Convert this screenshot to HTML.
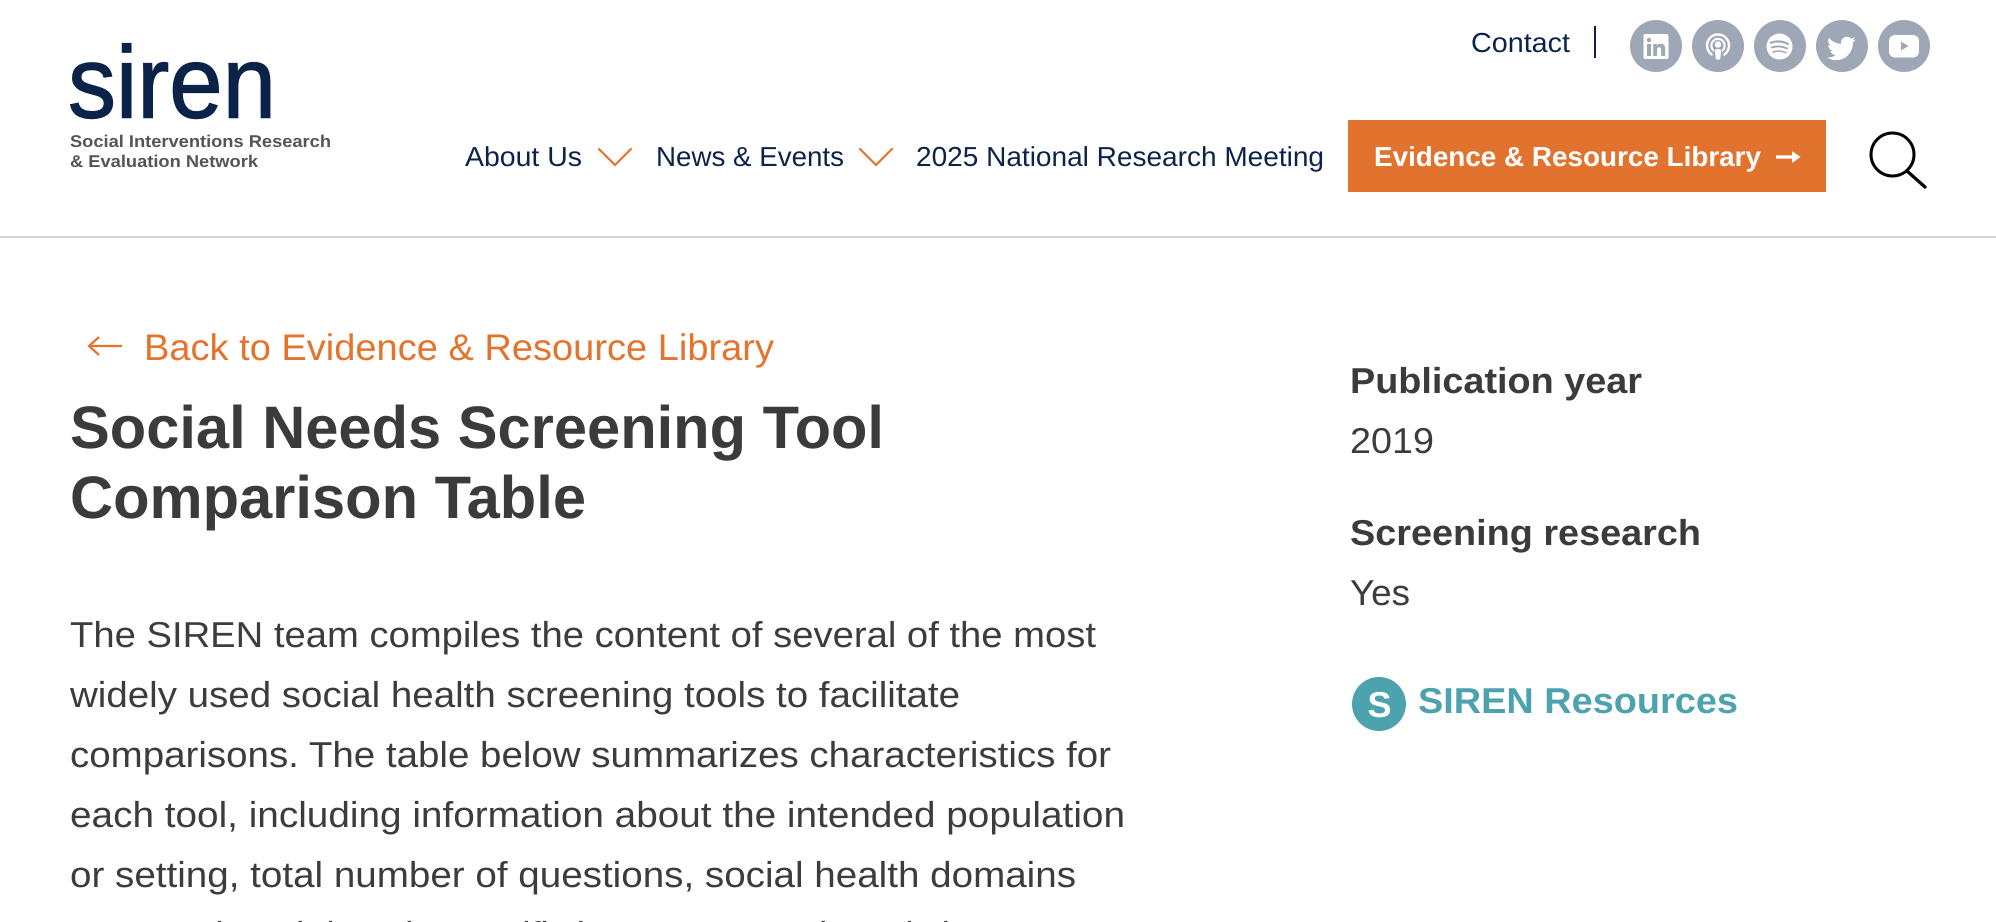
<!DOCTYPE html>
<html lang="en">
<head>
<meta charset="utf-8">
<title>Social Needs Screening Tool Comparison Table | SIREN</title>
<style>
html,body{margin:0;padding:0;background:#fff;width:1996px;height:922px;overflow:hidden}
svg{display:block}
text{font-family:"Liberation Sans",Arial,sans-serif;text-rendering:geometricPrecision}
.nav{font-size:27.5px;fill:#0b2249}
.body{font-size:36px;fill:#3c3c3c}
.h1{font-size:60px;font-weight:700;fill:#3b3b3b}
.lab{font-size:36px;font-weight:700;fill:#3b3b3b}
.sub{font-size:17px;font-weight:700;fill:#555}
</style>
</head>
<body>
<svg xmlns="http://www.w3.org/2000/svg" width="1996" height="922" viewBox="0 0 1996 922">
<rect width="1996" height="922" fill="#fff"/>

<!-- logo -->
<text x="68" y="117.500" font-size="102" fill="#0b2249" stroke="#0b2249" stroke-width="1.400" textLength="208" lengthAdjust="spacingAndGlyphs">siren</text>
<text class="sub" x="70" y="147" textLength="261" lengthAdjust="spacingAndGlyphs">Social Interventions Research</text>
<text class="sub" x="70" y="167" textLength="188" lengthAdjust="spacingAndGlyphs">&amp; Evaluation Network</text>

<!-- top row -->
<text class="nav" x="1471" y="52" textLength="99" lengthAdjust="spacingAndGlyphs">Contact</text>
<rect x="1594" y="26" width="2" height="32" fill="#0b2249"/>

<g fill="#9da7b5">
<circle cx="1656" cy="46" r="26"/><circle cx="1718" cy="46" r="26"/><circle cx="1780" cy="46" r="26"/><circle cx="1842" cy="46" r="26"/><circle cx="1904" cy="46" r="26"/>
</g>
<!-- linkedin -->
<g transform="translate(1656 46)">
<rect x="-12.500" y="-12" width="25" height="25" rx="2" fill="#fff"/>
<g fill="#9da7b5">
<circle cx="-7" cy="-6" r="2.200"/><rect x="-9" y="-2" width="4" height="12"/>
<path d="M-2.800-2h3.700v1.700c.8-1.300 2.100-2 3.700-2 3.500 0 4.600 2.300 4.600 5.400V10H5.200V4.300c0-1.600-.4-3-2-3-1.700 0-2.100 1.400-2.100 3V10H-2.800z"/>
</g>
</g>
<!-- podcast -->
<g transform="translate(1718 46)" fill="none" stroke="#fff">
<path d="M-6.300 8.500A11 11 0 1 1 6.300 8.500" stroke-width="2.400" stroke-linecap="round"/>
<path d="M-3.800 4.900A6.600 6.600 0 1 1 3.800 4.900" stroke-width="2.200" stroke-linecap="round"/>
<circle cx="0" cy="-1.500" r="3.200" fill="#fff" stroke="none"/>
<path d="M-3.800 3.500Q0 2 3.800 3.500L2.600 12.500Q2.200 14.200 0 14.200T-2.600 12.500Z" fill="#fff" stroke="#9da7b5" stroke-width=".8"/>
</g>
<!-- spotify -->
<g transform="translate(1779.500 46.500)">
<circle r="13" fill="#fff"/>
<g fill="none" stroke="#9da7b5" stroke-linecap="round">
<path d="M-8.500-3.800Q0-6.800 8.500-2.600" stroke-width="2.200"/>
<path d="M-7.500 1Q0-1.600 7.500 2" stroke-width="1.900"/>
<path d="M-6.500 5.500Q0 3.200 6.500 6.200" stroke-width="1.600"/>
</g>
</g>
<!-- twitter -->
<g transform="translate(1827 34) scale(1.200)">
<path fill="#fff" d="M23.953 4.570a10 10 0 0 1-2.825.775 4.958 4.958 0 0 0 2.163-2.723c-.951.555-2.005.959-3.127 1.184a4.920 4.920 0 0 0-8.384 4.482C7.690 8.095 4.067 6.130 1.640 3.162a4.822 4.822 0 0 0-.666 2.475c0 1.710.870 3.213 2.188 4.096a4.904 4.904 0 0 1-2.228-.616v.060a4.923 4.923 0 0 0 3.946 4.827 4.996 4.996 0 0 1-2.212.085 4.936 4.936 0 0 0 4.604 3.417 9.867 9.867 0 0 1-6.102 2.105c-.390 0-.779-.023-1.170-.067a13.995 13.995 0 0 0 7.557 2.209c9.053 0 13.998-7.496 13.998-13.985 0-.210 0-.420-.015-.630A9.935 9.935 0 0 0 24 4.590z"/>
</g>
<!-- youtube -->
<g transform="translate(1904 46)">
<rect x="-15" y="-11" width="30" height="22.500" rx="6" fill="#fff"/>
<path d="M-3-4.500L4.500 0-3 4.500Z" fill="#9da7b5"/>
</g>

<!-- main nav -->
<text class="nav" x="465" y="166" textLength="117" lengthAdjust="spacingAndGlyphs">About Us</text>
<path d="M599 149L615 165 631 149" fill="none" stroke="#e3732d" stroke-width="2.200" stroke-linecap="round"/>
<text class="nav" x="656" y="166" textLength="188" lengthAdjust="spacingAndGlyphs">News &amp; Events</text>
<path d="M860 149L876 165 892 149" fill="none" stroke="#e3732d" stroke-width="2.200" stroke-linecap="round"/>
<text class="nav" x="916" y="166" textLength="408" lengthAdjust="spacingAndGlyphs">2025 National Research Meeting</text>

<rect x="1348" y="120" width="478" height="72" fill="#e2732e"/>
<text x="1374" y="166" font-size="27.500" font-weight="700" fill="#fff" textLength="387" lengthAdjust="spacingAndGlyphs">Evidence &amp; Resource Library</text>
<path d="M1776 157H1795" stroke="#fff" stroke-width="3.200" fill="none"/>
<path d="M1792 151L1800.500 157 1792 163Z" fill="#fff"/>

<!-- search -->
<circle cx="1892.500" cy="154.500" r="21.500" fill="none" stroke="#000" stroke-width="3"/>
<path d="M1907 171L1925 187" stroke="#000" stroke-width="3.200" stroke-linecap="round"/>

<!-- header divider -->
<rect x="0" y="236" width="1996" height="2" fill="#d2d2d2"/>

<!-- back link -->
<path d="M122 346H89M99 337L89 346 99 355" fill="none" stroke="#e3732d" stroke-width="2.200"/>
<text x="144" y="360" font-size="37" fill="#e3732d" textLength="630" lengthAdjust="spacingAndGlyphs">Back to Evidence &amp; Resource Library</text>

<!-- title -->
<text class="h1" x="70" y="448" textLength="814" lengthAdjust="spacingAndGlyphs">Social Needs Screening Tool</text>
<text class="h1" x="70" y="518" textLength="516" lengthAdjust="spacingAndGlyphs">Comparison Table</text>

<!-- body -->
<text class="body" x="70" y="647" textLength="1026" lengthAdjust="spacingAndGlyphs">The SIREN team compiles the content of several of the most</text>
<text class="body" x="70" y="707" textLength="890" lengthAdjust="spacingAndGlyphs">widely used social health screening tools to facilitate</text>
<text class="body" x="70" y="767" textLength="1041" lengthAdjust="spacingAndGlyphs">comparisons. The table below summarizes characteristics for</text>
<text class="body" x="70" y="827" textLength="1055" lengthAdjust="spacingAndGlyphs">each tool, including information about the intended population</text>
<text class="body" x="70" y="887" textLength="1006" lengthAdjust="spacingAndGlyphs">or setting, total number of questions, social health domains</text>
<text class="body" x="70" y="947" textLength="900" lengthAdjust="spacingAndGlyphs">assessed, and domain-specific items assessed. Tools in</text>

<!-- sidebar -->
<text class="lab" x="1350" y="393" textLength="292" lengthAdjust="spacingAndGlyphs">Publication year</text>
<text class="body" x="1350" y="453" textLength="84" lengthAdjust="spacingAndGlyphs">2019</text>
<text class="lab" x="1350" y="545" textLength="351" lengthAdjust="spacingAndGlyphs">Screening research</text>
<text class="body" x="1350" y="605" textLength="60" lengthAdjust="spacingAndGlyphs">Yes</text>
<circle cx="1379" cy="704" r="27" fill="#4da3ad"/>
<text x="1379.500" y="717" font-size="36" font-weight="700" fill="#fff" text-anchor="middle">S</text>
<text x="1418" y="713" font-size="36" font-weight="700" fill="#4da3ad" textLength="320" lengthAdjust="spacingAndGlyphs">SIREN Resources</text>
</svg>
</body>
</html>
